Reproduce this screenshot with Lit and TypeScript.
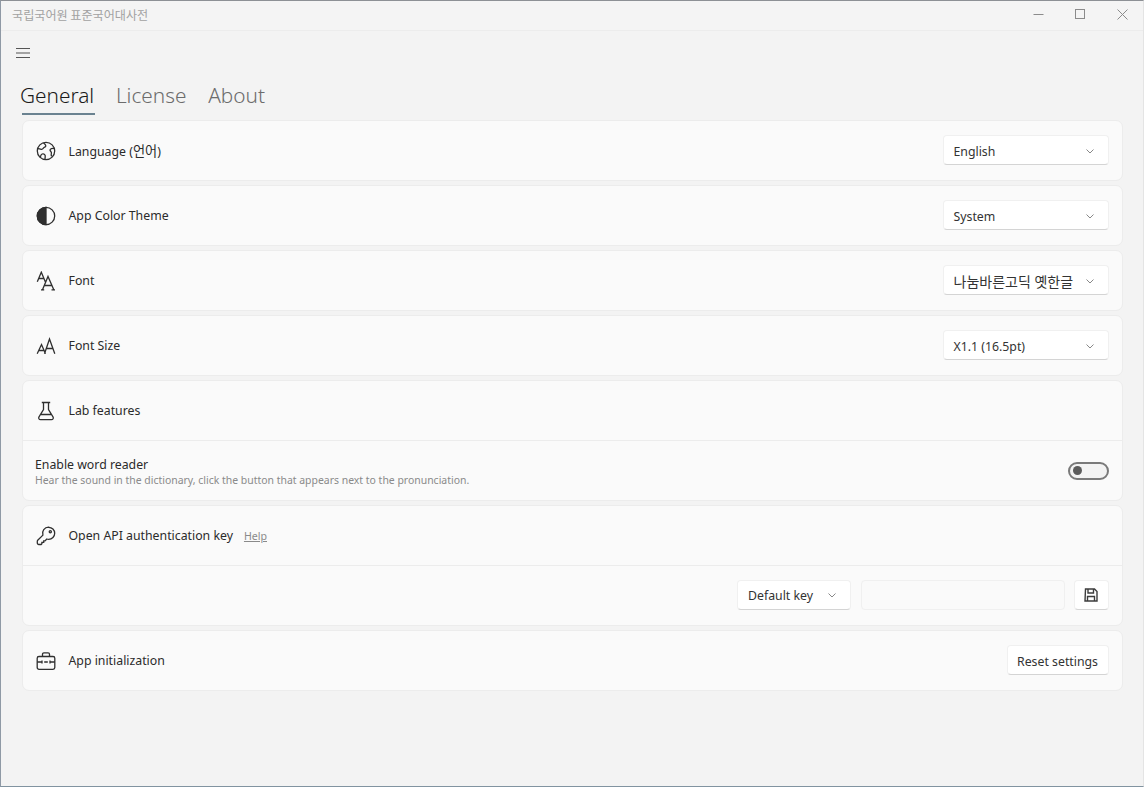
import {LitElement, html, css, svg} from 'lit';
import {customElement} from 'lit/decorators.js';

const icons = {
  globe: svg`<circle cx="10" cy="10" r="8.700"/><path d="M7.600 1.700c.6 1.400 2.200 1.700 2.200 3.200 0 1.200-1.400 1.100-2.200 2-.7.8-.9 1.500-2 1.400-1 0-2.200-1-3.800-.5M18.400 7.500c-1.400 0-3-.4-3.900.6-.8.800-.2 1.900.5 2.600.8.800.4 1.800.2 2.800-.1.800.2 1.400.5 1.900M4.200 16.500c.3-1.500.6-3 1.900-3.500 1.200-.4 2.500.2 3 1.300.4 1-.2 2.800-.1 4.300"/>`,
  theme: svg`<circle cx="10" cy="10" r="8.700"/><path d="M10 1.300a8.700 8.700 0 0 0 0 17.400z" fill="currentColor"/>`,
  font: svg`<path d="M1.300 10.800 5.300 1.200l4 9.600M2.800 7.500h5M6.500 18.800 12 5.500l5.800 13.300M8.300 14.500h7.800M5 18.800h3.200M15.500 18.800h3.500"/>`,
  size: svg`<path d="M1.200 17.800 5.500 8.500l4 9.300M3 14.500h5M8.500 17.800 13.500 3l5.300 14.800M10.300 12.500h6.400"/>`,
  flask: svg`<path d="M5.800 1.500h8.400M7.500 1.500v7L3 15.800c-.8 1.300 0 2.900 1.500 2.900h11c1.500 0 2.300-1.600 1.500-2.900l-4.500-7.300v-7M5 13.500h10"/>`,
  key: svg`<path d="M12.700 1.300a6 6 0 0 1 0 12c-.7 0-1.300-.1-1.900-.3l-1.800 1.900H7.700v1.500H5.900v1.300l-.8.800H2.800a1.500 1.500 0 0 1-1.500-1.500v-1.700c0-.4.100-.7.400-1l5.200-5.200a6 6 0 0 1 5.800-7.900z"/><circle cx="14.300" cy="5.700" r="1.100"/>`,
  case: svg`<rect x="1.200" y="5.500" width="17.600" height="12.800" rx="1.800"/><path d="M6.500 5.500V3.200c0-.8.600-1.400 1.400-1.400h4.200c.8 0 1.400.6 1.400 1.400v2.300M1.200 11h4.600M8.200 11h3.600M14.200 11h4.600M6 9.500v3M14 9.500v3"/>`,
};

@customElement('app-root')
class AppRoot extends LitElement {
  static styles = css`
    :host {
      display: flex;
      flex-direction: column;
      box-sizing: border-box;
      height: 787px;
      overflow: hidden;
      background: #f3f3f3;
      color: #2b2b2b;
      font-family: 'Noto Sans', 'Noto Sans CJK KR', sans-serif;
      font-size: 12.3px;
      border-top: 1px solid #8d9095;
      border-left: 1px solid #8f99a5;
      border-right: 1px solid #e4e4e4;
      border-bottom: 1px solid #8193a0;
    }
    svg {
      display: block;
      fill: none;
      stroke: currentColor;
    }
    .titlebar {
      flex: none;
      box-sizing: border-box;
      display: flex;
      align-items: center;
      height: 30px;
      padding: 0 0 2px 11px;
      border-bottom: 1px solid #ececec;
      background: #f4f4f4;
      color: #a2a2a2;
      font-family: 'Noto Sans CJK KR', sans-serif;
      font-size: 12.1px;
    }
    .title {
      flex: 1;
    }
    .winbtn {
      width: 42px;
      display: flex;
      justify-content: center;
      color: #8b8b8b;
    }
    .menu {
      flex: none;
      margin: 15.5px 0 0 15px;
      color: #555;
    }
    .tabs {
      flex: none;
      display: flex;
      gap: 21.7px;
      margin: 19.5px 0 0 19px;
      height: 36px;
      font-size: 20.8px;
      font-weight: 300;
      line-height: 34px;
      color: #6c6c6c;
    }
    .tab {
      position: relative;
    }
    .tab.active {
      color: #1a1a1a;
    }
    .tab.active::after {
      content: '';
      position: absolute;
      left: 1.5px;
      right: -0.5px;
      top: 34.5px;
      height: 2px;
      background: #6a8290;
    }
    .cards {
      display: flex;
      flex-direction: column;
      gap: 4.5px;
      margin: 6px 20px 0 20.5px;
    }
    .card {
      border: 1px solid #ececec;
      border-radius: 7px;
      background: #fafafa;
    }
    .row {
      box-sizing: border-box;
      display: flex;
      align-items: center;
      height: 58.5px;
      padding: 1px 13.5px 0 13px;
    }
    .row + .row {
      height: 60px;
      border-top: 1px solid #ececec;
    }
    .icon {
      flex: none;
      width: 20px;
      height: 20px;
      margin-right: 13px;
      color: #2f2f2f;
    }
    .label {
      flex: 1;
    }
    .help {
      flex: 1;
      margin-left: 11px;
      padding-top: 1px;
      font-size: 10.6px;
      color: #8a8a8a;
      text-decoration: underline;
    }
    .cjk {
      font-size: 13.2px;
    }
    .control {
      box-sizing: border-box;
      display: flex;
      align-items: center;
      height: 29.5px;
      margin-top: -1.5px;
      padding-top: 2px;
      border: 1px solid #f0f0f0;
      border-bottom-color: #d4d4d4;
      border-radius: 4px;
      background: #fff;
      color: #333;
    }
    .select {
      justify-content: space-between;
      width: 166px;
      padding-right: 14px;
      padding-left: 10px;
    }
    .select.short {
      width: 114px;
      margin-right: 10px;
    }
    .value-cjk {
      font-size: 14px;
    }
    .chev {
      color: #888;
    }
    .input {
      box-sizing: border-box;
      width: 204px;
      height: 29.5px;
      margin: -1.5px 9px 0 0;
      border: 1px solid #f0f0f0;
      border-radius: 4px;
      background: #fafafa;
    }
    .save {
      justify-content: center;
      width: 34.5px;
      padding-top: 0;
      color: #3c3c3c;
    }
    .reset {
      padding-right: 9.5px;
      padding-left: 9.5px;
    }
    .stack {
      flex: 1;
      display: flex;
      flex-direction: column;
      margin-left: -0.5px;
      padding-top: 2px;
    }
    .hint {
      font-size: 10.45px;
      color: #8a8a8a;
    }
    .switch {
      position: relative;
      box-sizing: border-box;
      width: 41px;
      height: 18px;
      border: 2px solid #7a7a7a;
      border-radius: 9px;
      background: #f3f3f3;
    }
    .switch::after {
      content: '';
      position: absolute;
      left: 3.5px;
      top: 2.5px;
      width: 9px;
      height: 9px;
      border-radius: 50%;
      background: #5c5c5c;
    }
  `;

  private chevron() {
    return html`<svg class="chev" width="8" height="5" viewBox="0 0 8 5"><path d="M.5.5 4 4 7.500.5"/></svg>`;
  }

  private icon(g: unknown) {
    return html`<svg class="icon" viewBox="0 0 20 20" stroke-width="1.3">${g}</svg>`;
  }

  private selectRow(g: unknown, label: unknown, value: string, cjk = false) {
    return html`<div class="card">
      <div class="row">
        ${this.icon(g)}<span class="label">${label}</span>
        <div class="control select"><span class=${cjk ? 'value-cjk' : ''}>${value}</span>${this.chevron()}</div>
      </div>
    </div>`;
  }

  render() {
    return html`
      <div class="titlebar">
        <span class="title">국립국어원 표준국어대사전</span>
        <span class="winbtn"><svg width="11" height="11" viewBox="0 0 11 11"><path d="M.5 5.5h10"/></svg></span>
        <span class="winbtn"><svg width="11" height="11" viewBox="0 0 11 11"><rect x=".5" y=".5" width="9" height="9"/></svg></span>
        <span class="winbtn"><svg width="11" height="11" viewBox="0 0 11 11"><path d="M.5.5l10 10M10.500.5l-10 10"/></svg></span>
      </div>
      <svg class="menu" width="14" height="12" viewBox="0 0 14 12" stroke-width="1.2"><path d="M0 1.500h14M0 6h14M0 10.500h14"/></svg>
      <div class="tabs">
        <span class="tab active">General</span>
        <span class="tab">License</span>
        <span class="tab">About</span>
      </div>
      <div class="cards">
        ${this.selectRow(icons.globe, html`Language (<span class="cjk">언어</span>)`, 'English')}
        ${this.selectRow(icons.theme, 'App Color Theme', 'System')}
        ${this.selectRow(icons.font, 'Font', '나눔바른고딕 옛한글', true)}
        ${this.selectRow(icons.size, 'Font Size', 'X1.1 (16.5pt)')}
        <div class="card">
          <div class="row">${this.icon(icons.flask)}<span class="label">Lab features</span></div>
          <div class="row">
            <div class="stack">
              <span>Enable word reader</span>
              <span class="hint">Hear the sound in the dictionary, click the button that appears next to the pronunciation.</span>
            </div>
            <div class="switch"></div>
          </div>
        </div>
        <div class="card">
          <div class="row">
            ${this.icon(icons.key)}<span>Open API authentication key</span><span class="help">Help</span>
          </div>
          <div class="row">
            <span class="label"></span>
            <div class="control select short"><span>Default key</span>${this.chevron()}</div>
            <div class="input"></div>
            <div class="control save">
              <svg width="14" height="14" viewBox="0 0 14 14" stroke-width="1.4"><path d="M1.500 1h9l2.500 2.500v9.500h-12zM4 1v4h5.500V1M3.500 13V8.500h7V13"/></svg>
            </div>
          </div>
        </div>
        <div class="card">
          <div class="row">
            ${this.icon(icons.case)}<span class="label">App initialization</span>
            <div class="control reset">Reset settings</div>
          </div>
        </div>
      </div>
    `;
  }
}
